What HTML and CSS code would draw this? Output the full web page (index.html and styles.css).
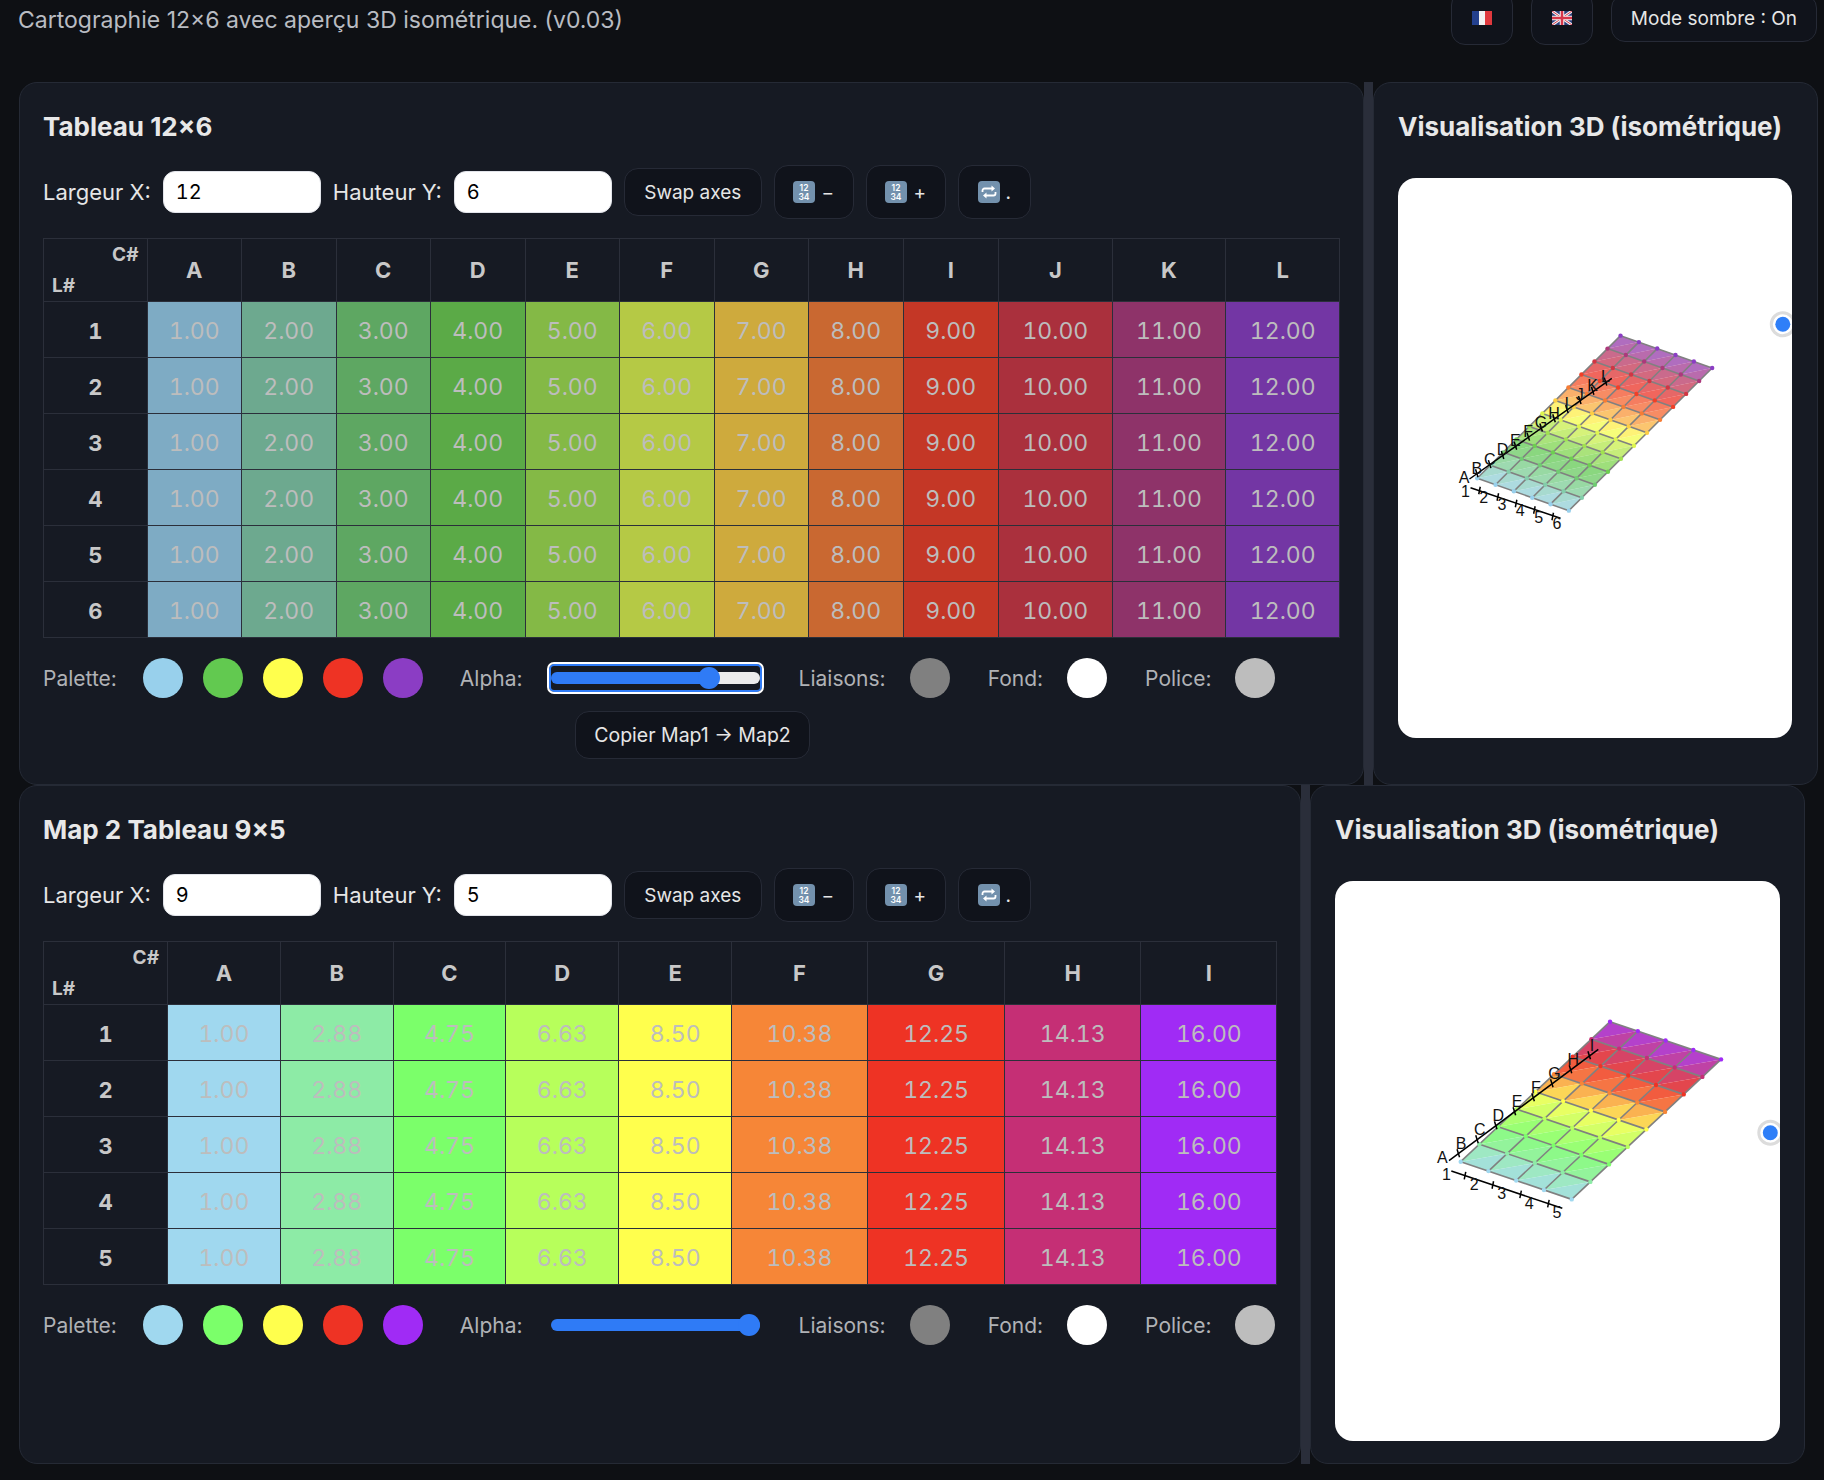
FILE: index.html
```html
<!DOCTYPE html>
<html lang="fr">
<head>
  <meta charset="utf-8">
  <link rel="stylesheet" href="styles.css">
  <title>Cartographie 12×6</title>
</head>
<body>
  <header class="topbar">
    <div class="subtitle">Cartographie 12×6 avec aperçu 3D isométrique. (v0.03)</div>
    <div class="top-actions">
      <button class="btn btn-flag">
        <svg width="20" height="14" viewBox="0 0 20 14">
          <rect width="7" height="14" fill="#23408e"/>
          <rect x="7" width="6" height="14" fill="#f2f2f2"/>
          <rect x="13" width="7" height="14" fill="#e0393e"/>
        </svg>
      </button>
      <button class="btn btn-flag">
        <svg width="20" height="14" viewBox="0 0 20 14">
          <rect width="20" height="14" fill="#2c3f7c"/>
          <path d="M0 0L20 14M20 0L0 14" stroke="#f2f2f2" stroke-width="3"/>
          <path d="M0 0L20 14M20 0L0 14" stroke="#d8374a" stroke-width="1"/>
          <path d="M10 0V14M0 7H20" stroke="#f2f2f2" stroke-width="4.500"/>
          <path d="M10 0V14M0 7H20" stroke="#d8374a" stroke-width="2.500"/>
        </svg>
      </button>
      <button class="btn">Mode sombre : On</button>
    </div>
  </header>

  <section class="map-row row-one">
    <div class="panel panel-table">
      <h2>Tableau 12×6</h2>
      <div class="controls">
        <label for="x1">Largeur X:</label>
        <input id="x1" class="dim" type="text" value="12">
        <label for="y1">Hauteur Y:</label>
        <input id="y1" class="dim" type="text" value="6">
        <button class="btn btn-swap">Swap axes</button>
        <button class="btn btn-tall">
          <svg class="ico" viewBox="0 0 22 22"><rect width="22" height="22" rx="4" class="ico-bg"/><text x="11" y="9.500" class="ico-text">12</text><text x="11" y="19" class="ico-text">34</text></svg>−
        </button>
        <button class="btn btn-tall">
          <svg class="ico" viewBox="0 0 22 22"><rect width="22" height="22" rx="4" class="ico-bg"/><text x="11" y="9.500" class="ico-text">12</text><text x="11" y="19" class="ico-text">34</text></svg>+
        </button>
        <button class="btn btn-tall btn-loop">
          <svg class="ico" viewBox="0 0 22 22"><rect width="22" height="22" rx="4" class="ico-bg"/><path d="M4.500 11V9.500a2 2 0 0 1 2-2h8M17.500 11v1.500a2 2 0 0 1-2 2h-8" class="ico-loop"/><path d="M13.500 4.500l3.500 3-3.500 3zM8.500 11.500l-3.500 3 3.500 3z" fill="#fff"/></svg>.
        </button>
      </div>
      <table class="grid" id="table1"></table>
      <div class="palette">
        <div class="group group-palette">
          <span>Palette:</span>
          <div class="swatches">
            <i class="swatch sky"></i><i class="swatch green"></i><i class="swatch yellow"></i><i class="swatch red"></i><i class="swatch purple"></i>
          </div>
        </div>
        <div class="group alpha-group">
          <span>Alpha:</span>
          <input class="alpha alpha-focus" type="range" min="0" max="1" step="0.01" value="0.79" style="--fill:76%">
        </div>
        <div class="group"><span>Liaisons:</span><i class="swatch grey"></i></div>
        <div class="group"><span>Fond:</span><i class="swatch white"></i></div>
        <div class="group"><span>Police:</span><i class="swatch silver"></i></div>
      </div>
      <div class="copy-line"><button class="btn btn-copy">Copier Map1 → Map2</button></div>
    </div>
    <div class="splitter"></div>
    <div class="panel panel-view">
      <h2>Visualisation 3D (isométrique)</h2>
      <div class="view"><svg id="view1" class="iso"></svg></div>
    </div>
  </section>

  <section class="map-row row-two">
    <div class="panel panel-table">
      <h2>Map 2 Tableau 9×5</h2>
      <div class="controls">
        <label for="x2">Largeur X:</label>
        <input id="x2" class="dim" type="text" value="9">
        <label for="y2">Hauteur Y:</label>
        <input id="y2" class="dim" type="text" value="5">
        <button class="btn btn-swap">Swap axes</button>
        <button class="btn btn-tall">
          <svg class="ico" viewBox="0 0 22 22"><rect width="22" height="22" rx="4" class="ico-bg"/><text x="11" y="9.500" class="ico-text">12</text><text x="11" y="19" class="ico-text">34</text></svg>−
        </button>
        <button class="btn btn-tall">
          <svg class="ico" viewBox="0 0 22 22"><rect width="22" height="22" rx="4" class="ico-bg"/><text x="11" y="9.500" class="ico-text">12</text><text x="11" y="19" class="ico-text">34</text></svg>+
        </button>
        <button class="btn btn-tall btn-loop">
          <svg class="ico" viewBox="0 0 22 22"><rect width="22" height="22" rx="4" class="ico-bg"/><path d="M4.500 11V9.500a2 2 0 0 1 2-2h8M17.500 11v1.500a2 2 0 0 1-2 2h-8" class="ico-loop"/><path d="M13.500 4.500l3.500 3-3.500 3zM8.500 11.500l-3.500 3 3.500 3z" fill="#fff"/></svg>.
        </button>
      </div>
      <table class="grid" id="table2"></table>
      <div class="palette">
        <div class="group group-palette">
          <span>Palette:</span>
          <div class="swatches">
            <i class="swatch sky2"></i><i class="swatch green2"></i><i class="swatch yellow"></i><i class="swatch red"></i><i class="swatch purple2"></i>
          </div>
        </div>
        <div class="group alpha-group">
          <span>Alpha:</span>
          <input class="alpha" type="range" min="0" max="1" step="0.01" value="1" style="--fill:100%">
        </div>
        <div class="group"><span>Liaisons:</span><i class="swatch grey"></i></div>
        <div class="group"><span>Fond:</span><i class="swatch white"></i></div>
        <div class="group"><span>Police:</span><i class="swatch silver"></i></div>
      </div>
    </div>
    <div class="splitter"></div>
    <div class="panel panel-view">
      <h2>Visualisation 3D (isométrique)</h2>
      <div class="view"><svg id="view2" class="iso"></svg></div>
    </div>
  </section>

  <script src="script.js"></script>
</body>
</html>
```

FILE: styles.css
```css
* {
  box-sizing: border-box;
}
body {
  margin: 0;
  height: 1480px;
  overflow: hidden;
  background: #0e1014;
  color: #e6e6e6;
  font-family: Inter, "Noto Sans", sans-serif;
}
.ico-bg {
  fill: #7391ad;
}
.ico-text {
  font: 600 8.5px Inter, sans-serif;
  fill: #fff;
  text-anchor: middle;
}
.ico-loop {
  fill: none;
  stroke: #fff;
  stroke-width: 1.8;
}

.topbar {
  display: flex;
  justify-content: space-between;
  align-items: center;
  height: 54px;
  margin-top: -9px;
  margin-bottom: 37px;
  padding: 0 7px 0 18px;
}
.subtitle {
  margin-top: 4px;
  font-size: 23px;
  color: #b9bcc2;
}
.top-actions {
  display: flex;
  align-items: center;
  gap: 18px;
}

.btn {
  display: inline-flex;
  align-items: center;
  justify-content: center;
  height: 48px;
  padding: 0 19px;
  background: #10131b;
  border: 1px solid #262a36;
  border-radius: 14px;
  color: #e6e6e6;
  font: 19px Inter, sans-serif;
  white-space: nowrap;
}
.btn-swap {
  width: 138px;
  padding: 0;
}
.btn-tall {
  width: 80px;
  height: 54px;
  padding: 0;
  gap: 6px;
}
.btn-loop {
  width: 73px;
}
.btn-flag {
  width: 62px;
  height: 54px;
  padding: 0;
}
.btn-copy {
  width: 235px;
  padding: 0;
  font-size: 19.5px;
}
.ico {
  width: 22px;
  height: 22px;
}

.map-row {
  display: flex;
  margin-left: 19px;
}
.row-one {
  height: 703px;
}
.row-two {
  height: 679px;
}
.panel {
  padding: 24px;
  background: #161a23;
  border: 1px solid #252a35;
  border-radius: 18px;
}
.panel-table {
  padding-left: 23px;
}
.row-one .panel-table {
  width: 1345px;
}
.row-one .panel-view {
  width: 445px;
  padding-right: 25px;
}
.row-two .panel-table {
  width: 1282px;
}
.row-two .panel-view {
  width: 495px;
}
.splitter {
  width: 9px;
  background: #2a2e3a;
}
h2 {
  margin: 0;
  font-size: 26px;
  font-weight: 700;
  line-height: 40px;
  color: #e8e8e8;
}

.controls {
  display: flex;
  align-items: center;
  gap: 12px;
  height: 54px;
  margin-top: 18px;
  margin-bottom: 19px;
  font-size: 22px;
}
.dim {
  width: 158px;
  height: 42px;
  padding: 0 12px;
  background: #fff;
  border: 1px solid #e2e4ea;
  border-radius: 12px;
  color: #000;
  font: 20px Inter, sans-serif;
  font-variant-numeric: tabular-nums;
}

.grid {
  border-collapse: collapse;
  table-layout: fixed;
  font-size: 23px;
  font-variant-numeric: tabular-nums;
}
.grid th,
.grid td {
  padding: 0;
  height: 56px;
  border: 1px solid #2b2f3a;
  text-align: center;
  color: #bdbdbd;
}
.grid td,
.grid tbody th {
  padding-top: 2px;
}
.grid thead th {
  height: 63px;
}
.grid th {
  font-size: 22px;
  font-weight: 700;
  color: #c8c8c8;
}
.corner span {
  display: block;
  padding: 0 8px;
  line-height: 30px;
}
.grid .corner {
  font-size: 19px;
}
.corner .c-mark {
  text-align: right;
}
.corner .l-mark {
  padding-top: 1px;
  text-align: left;
}

.palette {
  display: flex;
  align-items: center;
  gap: 38px;
  height: 40px;
  margin-top: 20px;
  font-size: 21px;
  color: #b0b2b6;
}
.group {
  display: flex;
  align-items: center;
  gap: 24px;
}
.group-palette {
  gap: 26px;
  margin-right: -1px;
}
.alpha-group {
  gap: 28px;
  margin-right: 1px;
}
.swatches {
  display: flex;
  gap: 20px;
}
.swatch {
  display: block;
  width: 40px;
  height: 40px;
  border-radius: 50%;
}
.sky { background: #98d0ec; }
.green { background: #62c950; }
.yellow { background: #ffff4d; }
.red { background: #ee3324; }
.purple { background: #8b3dc4; }
.sky2 { background: #a0d8ef; }
.green2 { background: #7bff6a; }
.purple2 { background: #a02bf5; }
.grey { background: #808080; }
.white { background: #fff; }
.silver { background: #bdbdbd; }

.alpha {
  -webkit-appearance: none;
  appearance: none;
  display: block;
  width: 209px;
  height: 24px;
  margin: 0;
  background: transparent;
  border-radius: 3px;
}
.alpha::-webkit-slider-runnable-track {
  height: 12px;
  border-radius: 6px;
  background: linear-gradient(to right, #2f7bf6 var(--fill), #ececec var(--fill));
}
.alpha::-webkit-slider-thumb {
  -webkit-appearance: none;
  width: 22px;
  height: 22px;
  margin-top: -5px;
  border-radius: 50%;
  background: #2f7bf6;
}
.alpha-focus {
  box-shadow: 0 0 0 2px #2f7bf6;
  outline: 2px solid #fff;
  outline-offset: 2px;
}

.copy-line {
  display: flex;
  justify-content: center;
  margin-top: 13px;
  padding-left: 3px;
}

.view {
  height: 560px;
  margin-top: 31px;
  background: #fff;
  border-radius: 18px;
  overflow: hidden;
}
.iso {
  display: block;
  width: 100%;
  height: 100%;
}
.iso text {
  font: 16px "Liberation Sans", Arial, sans-serif;
  fill: #111;
}
```

FILE: script.js
```js
// tables and iso previews for both maps
var SVGNS = "http://www.w3.org/2000/svg";

var maps = [
  {
    table: "table1", view: "view1", cols: 12, rows: 6, max: 12, alpha: 0.8, meshAlpha: 0.75,
    palette: ["#98d0ec", "#62c950", "#ffff4d", "#ee3324", "#8b3dc4"],
    widths: [103.5, 94.5, 94.5, 94.5, 94.5, 94.5, 94.5, 94.5, 94.5, 95.5, 113.7, 113.7, 113.7],
    // projected points, local to the white box
    origin: [79.2, 300.3], u: [13.03, -12.97], v: [18.33, 6.47],
    colAxis: { line: [[71.5, 301], [213.8, 200.3]], tick: [78.8, 295.3], step: [12.87, -9.17], count: 11, dir: [2.5, 8] },
    colLabel: { at: [66, 299], step: [12.85, -9.2] },
    rowAxis: { line: [[72.5, 309.7], [162.5, 340.3]], tick: [81.5, 312.5], step: [18.3, 6.5], count: 5, dir: [-1.5, 7.5] },
    rowLabel: { at: [67.5, 313], step: [18.27, 6.47] },
    dot: [384.8, 146.3]
  },
  {
    table: "table2", view: "view2", cols: 9, rows: 5, max: 16, alpha: 1, meshAlpha: 0.9,
    palette: ["#a0d8ef", "#7bff6a", "#ffff4d", "#ee3324", "#a02bf5"],
    widths: [124, 112.8, 112.8, 112.8, 112.8, 112.8, 136.1, 137.1, 136.1, 136.1],
    origin: [125.7, 280.7], u: [18.67, -17.5], v: [27.75, 9.42],
    colAxis: { line: [[114, 279.7], [263.3, 168.3]], tick: [123.3, 272.3], step: [18.7, -14], count: 8, dir: [2.5, 8] },
    colLabel: { at: [107.3, 275.7], step: [18.7, -13.95] },
    rowAxis: { line: [[116.3, 290], [227.3, 327.3]], tick: [130, 294.7], step: [27.8, 9.3], count: 4, dir: [-1.5, 7.5] },
    rowLabel: { at: [111.5, 293], step: [27.6, 9.5] },
    dot: [435.3, 251.7]
  }
];

function hexToRgb(hex) {
  return [parseInt(hex.substr(1, 2), 16), parseInt(hex.substr(3, 2), 16), parseInt(hex.substr(5, 2), 16)];
}

// mixed in sqrt space, midpoints come out darker than a plain lerp
function colorAt(palette, t) {
  var pos = Math.min(t, 1) * (palette.length - 1);
  var i = Math.min(Math.floor(pos), palette.length - 2);
  var a = hexToRgb(palette[i]), b = hexToRgb(palette[i + 1]), f = pos - i;
  return [0, 1, 2].map(function (k) {
    var s = Math.sqrt(a[k]) + (Math.sqrt(b[k]) - Math.sqrt(a[k])) * f;
    return Math.round(s * s);
  });
}

function rgba(c, alpha) {
  return "rgba(" + c[0] + "," + c[1] + "," + c[2] + "," + alpha + ")";
}

function buildTable(map) {
  var table = document.getElementById(map.table);
  var width = 0;
  var html = "<colgroup>";
  map.widths.forEach(function (w) {
    html += '<col style="width:' + w + 'px">';
    width += w;
  });
  html += "</colgroup><thead><tr>";
  html += '<th class="corner"><span class="c-mark">C#</span><span class="l-mark">L#</span></th>';
  for (var c = 0; c < map.cols; c++) {
    html += "<th>" + String.fromCharCode(65 + c) + "</th>";
  }
  html += "</tr></thead><tbody>";
  for (var r = 0; r < map.rows; r++) {
    html += "<tr><th>" + (r + 1) + "</th>";
    for (c = 0; c < map.cols; c++) {
      var t = c / (map.cols - 1);
      var value = 1 + t * (map.max - 1);
      html += '<td style="background:' + rgba(colorAt(map.palette, t), map.alpha) + '">' + value.toFixed(2) + "</td>";
    }
    html += "</tr>";
  }
  table.style.width = width + "px";
  table.innerHTML = html + "</tbody>";
}

function el(svg, tag, attrs, text) {
  var node = document.createElementNS(SVGNS, tag);
  for (var k in attrs) node.setAttribute(k, attrs[k]);
  if (text) node.textContent = text;
  svg.appendChild(node);
  return node;
}

function pt(map, c, r) {
  return [map.origin[0] + map.u[0] * c + map.v[0] * r, map.origin[1] + map.u[1] * c + map.v[1] * r];
}

function drawAxis(svg, axis) {
  el(svg, "line", { x1: axis.line[0][0], y1: axis.line[0][1], x2: axis.line[1][0], y2: axis.line[1][1], stroke: "#000", "stroke-width": 1.5 });
  for (var i = 0; i < axis.count; i++) {
    var x = axis.tick[0] + axis.step[0] * i, y = axis.tick[1] + axis.step[1] * i;
    el(svg, "line", { x1: x - axis.dir[0] / 2, y1: y - axis.dir[1] / 2, x2: x + axis.dir[0] / 2, y2: y + axis.dir[1] / 2, stroke: "#000", "stroke-width": 1.5 });
  }
}

function drawLabels(svg, label, count, nameOf) {
  for (var i = 0; i < count; i++) {
    el(svg, "text", {
      x: label.at[0] + label.step[0] * i,
      y: label.at[1] + label.step[1] * i + 6,
      "text-anchor": "middle"
    }, nameOf(i));
  }
}

function buildView(map) {
  var svg = document.getElementById(map.view);
  var last = map.cols - 1;
  var c, r;

  for (c = 0; c < last; c++) {
    var upper = rgba(colorAt(map.palette, (c + 2 / 3) / last), map.meshAlpha);
    var lower = rgba(colorAt(map.palette, (c + 1 / 3) / last), map.meshAlpha);
    for (r = 0; r < map.rows - 1; r++) {
      var a = pt(map, c, r), b = pt(map, c + 1, r), d = pt(map, c + 1, r + 1), e = pt(map, c, r + 1);
      el(svg, "polygon", { points: [a, b, d].join(" "), fill: upper });
      el(svg, "polygon", { points: [a, d, e].join(" "), fill: lower });
    }
  }

  // liaisons
  for (r = 0; r < map.rows; r++) {
    var p = pt(map, 0, r), q = pt(map, last, r);
    el(svg, "line", { x1: p[0], y1: p[1], x2: q[0], y2: q[1], stroke: "#808080", "stroke-width": 1.6 });
  }
  for (c = 0; c < map.cols; c++) {
    p = pt(map, c, 0);
    q = pt(map, c, map.rows - 1);
    el(svg, "line", { x1: p[0], y1: p[1], x2: q[0], y2: q[1], stroke: "#808080", "stroke-width": 1.6 });
  }
  for (c = 0; c < map.cols; c++) {
    for (r = 0; r < map.rows; r++) {
      p = pt(map, c, r);
      el(svg, "circle", { cx: p[0], cy: p[1], r: 2.2, fill: rgba(colorAt(map.palette, c / last), 1) });
    }
  }

  drawAxis(svg, map.colAxis);
  drawAxis(svg, map.rowAxis);
  drawLabels(svg, map.colLabel, map.cols, function (i) { return String.fromCharCode(65 + i); });
  drawLabels(svg, map.rowLabel, map.rows, function (i) { return String(i + 1); });

  el(svg, "circle", { cx: map.dot[0], cy: map.dot[1], r: 11.5, fill: "#fff", stroke: "#dcdcdc", "stroke-width": 3 });
  el(svg, "circle", { cx: map.dot[0], cy: map.dot[1], r: 7.5, fill: "#2f7ff8" });
}

maps.forEach(function (map) {
  buildTable(map);
  buildView(map);
});
```
